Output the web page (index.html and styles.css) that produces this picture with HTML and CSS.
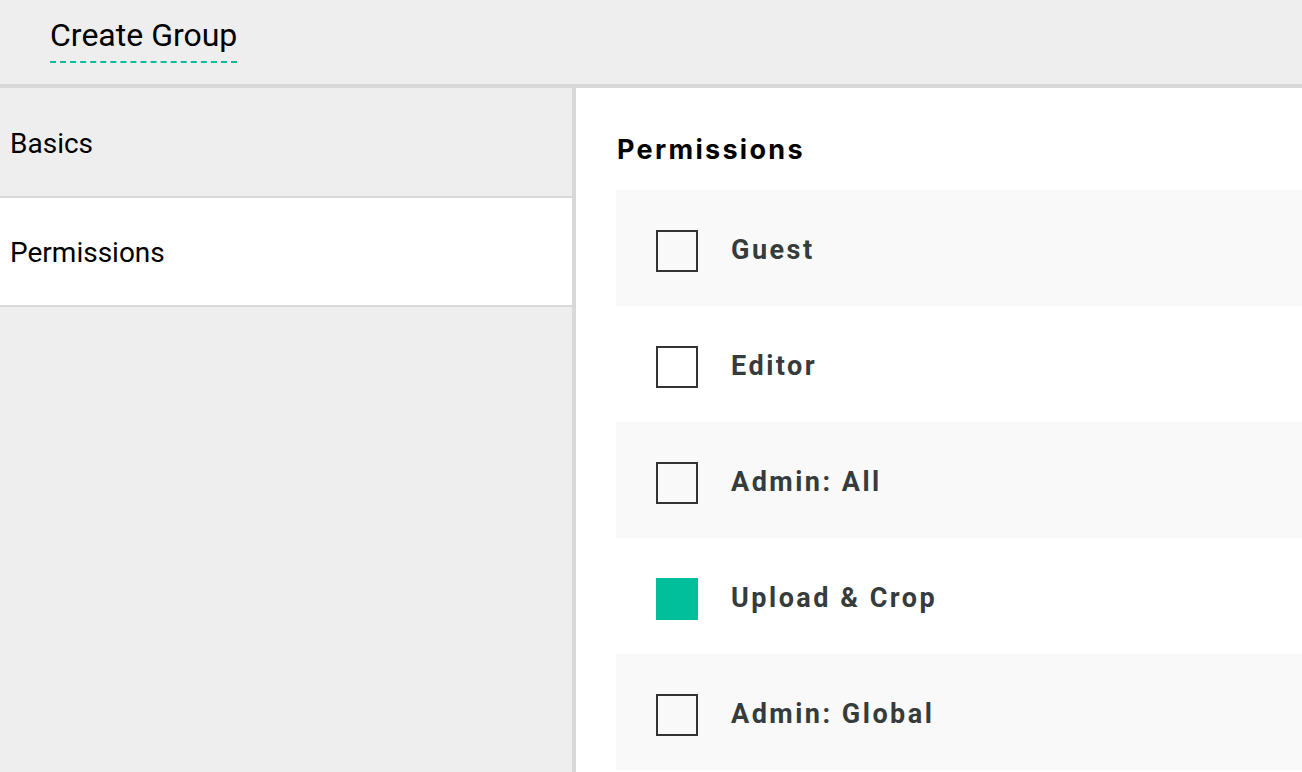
FILE: index.html
```html
<!DOCTYPE html>
<html>
<head>
<meta charset="utf-8">
<link rel="stylesheet" href="styles.css">
</head>
<body>
<header class="topbar">
  <h1 class="title">Create Group</h1>
</header>
<div class="layout">
  <nav class="sidebar">
    <div class="nav-item">Basics</div>
    <div class="nav-item active">Permissions</div>
  </nav>
  <main class="content">
    <h2 class="heading">Permissions</h2>
    <ul class="perm-list">
      <li class="perm-row"><span class="box"></span><span class="label">Guest</span></li>
      <li class="perm-row"><span class="box"></span><span class="label">Editor</span></li>
      <li class="perm-row"><span class="box"></span><span class="label">Admin: All</span></li>
      <li class="perm-row"><span class="box checked"></span><span class="label">Upload &amp; Crop</span></li>
      <li class="perm-row"><span class="box"></span><span class="label">Admin: Global</span></li>
    </ul>
  </main>
</div>
</body>
</html>
```
FILE: styles.css
```css
* { box-sizing: border-box; }
html, body { margin: 0; padding: 0; }
body {
  font-family: Roboto, "Liberation Sans", sans-serif;
  background: #ffffff;
  width: 1302px;
  height: 772px;
  overflow: hidden;
}
.topbar {
  height: 88px;
  background: #eeeeee;
  border-bottom: 4px solid #d8d8d8;
  padding-left: 50px;
  display: flex;
  align-items: flex-start;
}
.title {
  margin: 16px 0 0 0;
  font-size: 32px;
  font-weight: 400;
  color: #000;
  line-height: 38px;
  padding-bottom: 7px;
  border-bottom: 2px dashed #00bf9a;
}
.layout {
  display: flex;
  height: 684px;
}
.sidebar {
  width: 576px;
  background: #eeeeee;
  border-right: 4px solid #d8d8d8;
  flex-shrink: 0;
}
.nav-item {
  height: 110px;
  padding-left: 10px;
  padding-top: 2px;
  display: flex;
  align-items: center;
  font-size: 28px;
  color: #000;
  border-bottom: 2px solid #d8d8d8;
}
.nav-item.active { background: #ffffff; height: 109px; }
.content {
  flex: 1;
  padding-left: 40px;
}
.heading {
  margin: 45px 0 0 1px;
  font-family: Inter, "Noto Sans", sans-serif;
  font-size: 27px;
  font-weight: 700;
  letter-spacing: 2.3px;
  line-height: 34px;
  color: #000;
}
.perm-list {
  list-style: none;
  margin: 23px 0 0 0;
  padding: 0;
}
.perm-row {
  height: 116px;
  display: flex;
  align-items: center;
  padding-left: 40px;
  background: #ffffff;
}
.perm-row:nth-child(odd) { background: #f9f9f9; }
.box {
  width: 42px;
  height: 42px;
  border: 2px solid #333333;
  flex-shrink: 0;
  margin-top: 6px;
}
.box.checked { background: #00bf9a; border-color: #00bf9a; }
.label {
  margin-left: 33px;
  font-size: 27px;
  font-weight: 700;
  letter-spacing: 2.5px;
  color: #363b3b;
  padding-top: 4px;
}
```
